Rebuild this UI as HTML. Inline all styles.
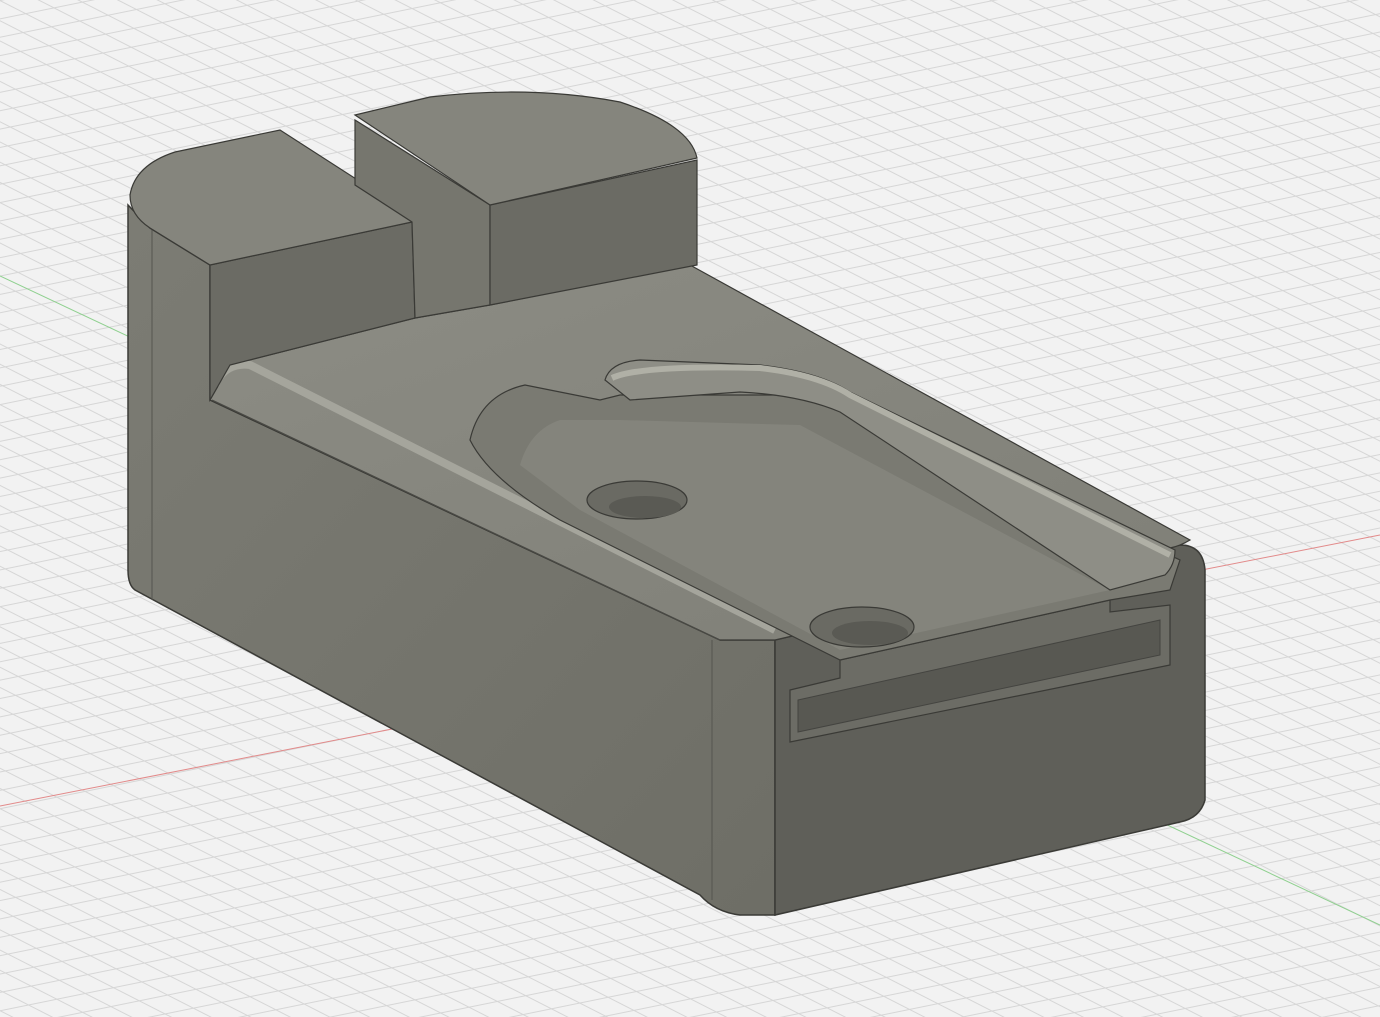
<!DOCTYPE html>
<html><head><meta charset="utf-8"><style>html,body{margin:0;padding:0;background:#f2f2f2;overflow:hidden;width:1380px;height:1017px}svg{display:block;position:absolute;left:0;top:0}</style></head>
<body>
<svg width="1380" height="1017" viewBox="0 0 1380 1017" xmlns="http://www.w3.org/2000/svg">
<defs>
<pattern id="g1" width="1380" height="18" patternUnits="userSpaceOnUse" patternTransform="rotate(-11.5)"><line x1="0" y1="0.5" x2="1380" y2="0.5" stroke="#d6d6d6" stroke-width="1"/></pattern>
<pattern id="g2" width="1380" height="18" patternUnits="userSpaceOnUse" patternTransform="rotate(27)"><line x1="0" y1="0.5" x2="1380" y2="0.5" stroke="#d6d6d6" stroke-width="1"/></pattern>
<linearGradient id="front" x1="0" y1="0" x2="1" y2="1"><stop offset="0" stop-color="#7c7c74"/><stop offset="1" stop-color="#6e6e66"/></linearGradient>
<linearGradient id="top" x1="0" y1="0" x2="1" y2="1"><stop offset="0" stop-color="#8c8c84"/><stop offset="1" stop-color="#7f7f77"/></linearGradient>
</defs>
<rect width="1380" height="1017" fill="#f2f2f2"/>
<rect width="1380" height="1017" fill="url(#g1)"/>
<rect width="1380" height="1017" fill="url(#g2)"/>
<line x1="0" y1="806" x2="1380" y2="535" stroke="#e28a8a" stroke-width="1"/>
<line x1="0" y1="276" x2="1380" y2="925" stroke="#8fd08f" stroke-width="1"/>

<path d="M128,205 L150,228 L210,265 L210,400 L720,640 L775,640 L775,915 L740,915 Q715,912 700,895 L135,590 Q128,585 128,570 Z" fill="url(#front)" stroke="#3a3a36" stroke-width="1.5"/>
<line x1="152" y1="230" x2="152" y2="600" stroke="#55554f" stroke-width="1"/>
<line x1="712" y1="640" x2="712" y2="900" stroke="#55554f" stroke-width="1"/>
<path d="M775,640 L1180,545 Q1203,545 1205,570 L1205,800 Q1200,818 1180,822 L775,915 Z" fill="#5f5f59" stroke="#3a3a36" stroke-width="1.5"/>
<path d="M790,690 L840,678 L840,660 L1110,600 L1110,612 L1170,605 L1170,665 L790,742 Z" fill="#6c6c65" stroke="#3a3a36" stroke-width="1.2"/>
<path d="M798,700 L1160,620 L1160,655 L798,732 Z" fill="#585852" stroke="#444440" stroke-width="1"/>
<path d="M210,400 L230,365 L415,318 L490,305 L690,265 L1190,540 Q1180,546 1170,548 L775,640 L720,640 Z" fill="url(#top)" stroke="#3a3a36" stroke-width="1.2"/>
<path d="M215,385 Q225,362 250,365 L775,630" fill="none" stroke="#a5a59c" stroke-width="8"/>
<path d="M212,400 L720,640" fill="none" stroke="#4a4a45" stroke-width="1.2"/>
<path d="M470,440 Q480,395 525,385 L600,400 L620,395 L820,395 L1180,560 L1170,590 L1110,600 L840,660 L800,640 L560,520 Q490,480 470,440 Z" fill="#7a7a72" stroke="#3a3a36" stroke-width="1.2"/>
<path d="M520,465 Q530,430 560,420 L620,420 L800,425 L1110,590 L840,650 L580,510 Z" fill="#84847c"/>
<path d="M605,380 Q610,362 640,360 L760,365 Q820,372 850,392 L1175,550 Q1175,565 1165,575 L1110,590 L840,412 Q800,395 740,392 L630,400 Z" fill="#8e8e86" stroke="#3a3a36" stroke-width="1.2"/>
<path d="M612,378 Q640,365 760,368 Q820,375 850,395 L1170,555" fill="none" stroke="#b0b0a6" stroke-width="6"/>
<ellipse cx="637" cy="500" rx="50" ry="19" fill="#6a6a63" stroke="#3a3a36" stroke-width="1.2"/>
<ellipse cx="645" cy="507" rx="36" ry="11" fill="#5a5a54"/>
<ellipse cx="862" cy="627" rx="52" ry="20" fill="#6a6a63" stroke="#3a3a36" stroke-width="1.2"/>
<ellipse cx="870" cy="633" rx="38" ry="12" fill="#5a5a54"/>
<path d="M210,265 L412,222 L415,318 L230,365 L210,400 Z" fill="#6b6b64" stroke="#3a3a36" stroke-width="1.2"/>
<path d="M130,195 Q135,165 175,152 L280,130 L412,215 L412,222 L210,265 L150,228 Q130,215 130,195 Z" fill="#85857d" stroke="#3a3a36" stroke-width="1.2"/>
<path d="M355,120 L490,205 L490,305 L415,318 L412,222 L355,185 Z" fill="#76766e" stroke="#3a3a36" stroke-width="1.2"/>
<path d="M490,205 L697,160 L697,265 L490,305 Z" fill="#6b6b64" stroke="#3a3a36" stroke-width="1.2"/>
<path d="M355,115 L430,97 Q530,85 620,102 Q690,125 697,158 L490,205 Z" fill="#85857d" stroke="#3a3a36" stroke-width="1.2"/>
</svg>
</body></html>
